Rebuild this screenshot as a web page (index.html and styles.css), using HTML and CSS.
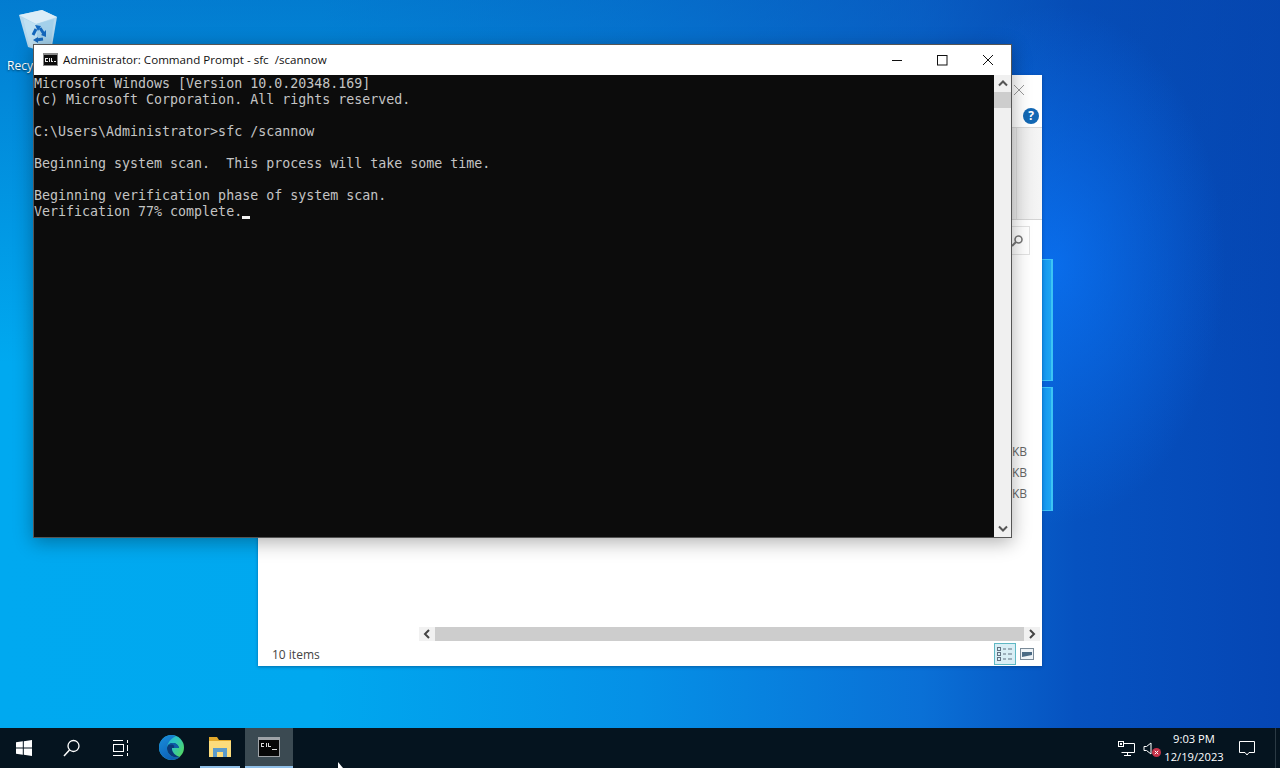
FILE: index.html
```html
<!DOCTYPE html>
<html lang="en">
<head>
<meta charset="utf-8">
<title>Administrator: Command Prompt - sfc /scannow</title>
<link rel="stylesheet" href="styles.css">
</head>
<body>
<main class="desktop">
  <div class="logo-pane logo-top"></div>
  <div class="logo-pane logo-bottom"></div>

  <div class="recycle">
    <svg class="recycle-icon" width="40" height="40" viewBox="0 0 40 40">
      <path d="M1 5 L24 0 L39 7 L34 36 Q22 42 10 37 Z" fill="#b5d8ee"/>
      <path d="M1 5 L24 0 L39 7 L18 14 Z" fill="#dcedf7"/>
      <path d="M5 8 L18 14 L36 9 L33 34 Q22 39 11 35 Z" fill="#a4d0ea"/>
      <path d="M5 8 L18 14 L20 38 Q14 38 11 35 Z" fill="#bfe0f2"/>
      <g fill="none" stroke="#1467bd" stroke-width="3">
        <path d="M15 25 L18 19"/>
        <path d="M22 18 L26 24"/>
        <path d="M25 29 L18 30"/>
      </g>
      <path d="M17 15 L23 16 L20 21 Z M28 20 L28 27 L23 25 Z M20 27 L20 33 L15 30 Z" fill="#1467bd"/>
    </svg>
    <span class="recycle-label">Recy</span>
  </div>

  <section class="explorer">
    <div class="exp-title">
      <svg width="10" height="10" viewBox="0 0 10 10"><path d="M0 0 L10 10 M10 0 L0 10" stroke="#9a9a9a" fill="none"/></svg>
    </div>
    <div class="exp-menu"><span class="help">?</span></div>
    <div class="exp-ribbon"><span class="ribbon-rule"></span></div>
    <div class="exp-address">
      <div class="search-box">
        <svg width="14" height="14" viewBox="0 0 14 14"><circle cx="8.500" cy="5.500" r="3.500" fill="none" stroke="#777" stroke-width="1.600"/><path d="M6 8 L2 12" stroke="#777" stroke-width="2"/></svg>
      </div>
    </div>
    <div class="exp-list">
      <div class="sizes"><span>KB</span><span>KB</span><span>KB</span></div>
    </div>
    <div class="exp-hscroll">
      <span class="arrow-btn"><svg width="8" height="10" viewBox="0 0 8 10"><path d="M6 1 L2 5 L6 9" fill="none" stroke="#444" stroke-width="2"/></svg></span>
      <span class="hthumb"></span>
      <span class="arrow-btn"><svg width="8" height="10" viewBox="0 0 8 10"><path d="M2 1 L6 5 L2 9" fill="none" stroke="#444" stroke-width="2"/></svg></span>
    </div>
    <div class="exp-status">
      <span class="items">10 items</span>
      <span class="view-btn view-on">
        <svg width="18" height="16" viewBox="0 0 18 16"><g fill="none" stroke="#607080"><rect x="1.500" y="1.500" width="3" height="3"/><rect x="1.500" y="6.500" width="3" height="3"/><rect x="1.500" y="11.500" width="3" height="3"/><path d="M7 3h3M12 3h4M7 8h3M12 8h4M7 13h3M12 13h4"/></g></svg>
      </span>
      <span class="view-btn">
        <svg width="14" height="12" viewBox="0 0 14 12"><rect x=".5" y=".5" width="13" height="11" fill="#eef3f7" stroke="#7a8a98"/><path d="M2 9 L2 4 L12 4 L12 7 Z" fill="#4a6a84"/></svg>
      </span>
    </div>
  </section>

  <section class="cmd">
    <header class="cmd-title">
      <svg class="cmd-icon" width="15" height="13" viewBox="0 0 15 13"><rect width="15" height="13" fill="#8a8a8a"/><rect y="2" x="1" width="13" height="10" fill="#0c0c0c"/><path d="M2 5h3v1H2zM2 8h3v1H2zM2 5h1v4H2zM6 5h1v4H6zM8 5h1v3h1v1H8zM11 8h2v1h-2z" fill="#e8e8e8"/></svg>
      <span class="cmd-caption">Administrator: Command Prompt - sfc  /scannow</span>
      <div class="win-btns">
        <span class="win-btn"><svg width="12" height="12" viewBox="0 0 12 12"><path d="M2 6.500h10" stroke="#111" fill="none"/></svg></span>
        <span class="win-btn"><svg width="12" height="12" viewBox="0 0 12 12"><rect x="1.500" y="1.500" width="9.500" height="9.500" stroke="#111" fill="none"/></svg></span>
        <span class="win-btn"><svg width="12" height="12" viewBox="0 0 12 12"><path d="M1 1 L11 11 M11 1 L1 11" stroke="#111" fill="none"/></svg></span>
      </div>
    </header>
    <div class="cmd-body">
      <pre class="console">Microsoft Windows [Version 10.0.20348.169]
(c) Microsoft Corporation. All rights reserved.

C:\Users\Administrator&gt;sfc /scannow

Beginning system scan.  This process will take some time.

Beginning verification phase of system scan.
Verification 77% complete.<span class="caret"></span></pre>
      <div class="vscroll">
        <span class="v-arrow"><svg width="10" height="7" viewBox="0 0 10 7"><path d="M1 5.500 L5 1.500 L9 5.500" fill="none" stroke="#555" stroke-width="2"/></svg></span>
        <span class="vthumb"></span>
        <span class="v-space"></span>
        <span class="v-arrow"><svg width="10" height="7" viewBox="0 0 10 7"><path d="M1 1.500 L5 5.500 L9 1.500" fill="none" stroke="#555" stroke-width="2"/></svg></span>
      </div>
    </div>
  </section>
</main>

<footer class="taskbar">
  <span class="tb-btn tb-start"><svg width="16" height="16" viewBox="0 0 16 16"><path d="M0 2.300 L6.800 1.300 V7.500 H0 Z M7.800 1.200 L16 0 V7.500 H7.800 Z M0 8.500 H6.800 V14.700 L0 13.700 Z M7.800 8.500 H16 V16 L7.800 14.800 Z" fill="#fff"/></svg></span>
  <span class="tb-btn tb-search"><svg width="18" height="18" viewBox="0 0 18 18"><circle cx="10.500" cy="7" r="5.500" fill="none" stroke="#fff" stroke-width="1.300"/><path d="M6.500 11 L1 17" stroke="#fff" stroke-width="1.500" fill="none"/></svg></span>
  <span class="tb-btn tb-task"><svg width="17" height="16" viewBox="0 0 17 16"><g fill="none" stroke="#fff"><path d="M1 .5h10M1 15.500h10"/><rect x="1.500" y="4.500" width="10" height="7"/><path d="M15.500 0v3M15.500 5v6M15.500 13v3"/></g></svg></span>
  <span class="tb-app tb-edge"><svg width="25" height="25" viewBox="0 0 25 25">
    <defs>
      <linearGradient id="edgeA" x1="0" y1="0" x2="1" y2=".6"><stop offset="0" stop-color="#1fa6e6"/><stop offset=".6" stop-color="#2ec5c0"/><stop offset="1" stop-color="#4fd56a"/></linearGradient>
      <linearGradient id="edgeB" x1="0" y1="0" x2=".6" y2="1"><stop offset="0" stop-color="#1a8fdc"/><stop offset="1" stop-color="#0c5fb4"/></linearGradient>
    </defs>
    <circle cx="12.500" cy="12.500" r="12.500" fill="url(#edgeA)"/>
    <path d="M12.500 0 A12.500 12.500 0 0 0 12.500 25 C16 25 19 23.800 21 22 C14 23.500 8 19.500 8 13.500 C8 8.500 11 4 17 1 C15.500 .4 14 0 12.500 0 Z" fill="url(#edgeB)"/>
    <path d="M21 22 C14 23.500 8 19.500 8 13.500 C8 10.500 10 8 13.500 8 C17 8 19.500 10 20 13 H13 C12.500 17 16.500 21 21 22 Z" fill="#0a3a78"/>
    <path d="M20 13 C19.500 10 17 8 13.500 8 C11.500 8 10 9 9.200 10.200 C10.500 9.400 12 9.200 13.500 9.600 C15 10 15.500 11.500 15 13 Z" fill="#0e5da8"/>
  </svg></span>
  <span class="tb-app tb-folder"><svg width="22" height="20" viewBox="0 0 22 20">
    <path d="M0 0 H8 L10 3 H22 V20 H0 Z" fill="#e2a92c"/>
    <path d="M0 4 H22 V20 H0 Z" fill="#fbdc7c"/>
    <path d="M4 20 V11 H18 V20 H14 V15 H8 V20 Z" fill="#5a9bcb"/>
  </svg></span>
  <span class="tb-app tb-cmd"><svg width="22" height="20" viewBox="0 0 22 20">
    <rect width="22" height="20" fill="#a0a4a8"/><rect x="1" y="3" width="20" height="16" fill="#070707"/>
    <path d="M3 6h3v1H3zM3 9h3v1H3zM3 6h1v4H3zM8 6h1v4H8zM10 6h1v3h2v1h-3zM14 12h5v1h-5z" fill="#dcdcdc"/>
  </svg></span>
  <svg class="pointer" width="9" height="6" viewBox="0 0 9 6"><path d="M1 0 V6 H6 Z" fill="#fff"/></svg>
  <div class="tray">
    <svg class="tray-net" width="17" height="15" viewBox="0 0 17 15"><g fill="none" stroke="#fff"><path d="M3.500 2.500H16.500V11.500H3.500"/><path d="M9.500 11.500V14M6 14.500H13"/></g><rect x=".5" y=".5" width="5" height="5" fill="#06141e" stroke="#fff"/><rect x="2" y="2" width="2" height="2" fill="#fff"/></svg>
    <span class="tray-vol">
      <svg width="11" height="13" viewBox="0 0 11 13"><path d="M1 4.500H3.500L8 1V12L3.500 8.500H1Z" fill="none" stroke="#fff"/></svg>
      <svg class="vol-x" width="9" height="9" viewBox="0 0 9 9"><circle cx="4.500" cy="4.500" r="4.500" fill="#c8324a"/><path d="M2.800 2.800L6.200 6.200M6.200 2.800L2.800 6.200" stroke="#fff"/></svg>
    </span>
    <div class="clock"><span>9:03 PM</span><span>12/19/2023</span></div>
    <span class="notify"><svg width="16" height="15" viewBox="0 0 16 15"><path d="M.5.500H15.500V11.500H10L8 14L6 11.500H.5Z" fill="none" stroke="#fff"/></svg></span>
    <span class="show-desktop"></span>
  </div>
</footer>
</body>
</html>
```
FILE: styles.css
```css
* { box-sizing: border-box; }
html, body { margin: 0; height: 100%; overflow: hidden; }
body {
  display: flex;
  flex-direction: column;
  width: 1280px;
  height: 768px;
  font-family: "Open Sans", "Noto Sans", sans-serif;
}
.desktop {
  position: relative;
  flex: 1;
  background:
    radial-gradient(ellipse 170px 260px at 1055px 265px, rgba(10,115,245,.8), rgba(10,115,245,0) 100%),
    linear-gradient(180deg, rgba(6,70,170,.45) 0, rgba(6,70,170,0) 50%),
    linear-gradient(90deg, #00a9f0 0, #00a8ef 25%, #0590e6 50%, #0a70d6 72%, #0652c0 84%, #0546b4 100%);
  overflow: hidden;
}
.logo-pane {
  position: absolute;
  left: 1040px;
  width: 13px;
  background: linear-gradient(90deg, #0e8cec, #1ea6f2);
  border: 1px solid #3cc4f4;
  border-left: 0;
  border-right-width: 2px;
}
.logo-top { top: 259px; height: 122px; }
.logo-bottom { top: 387px; height: 124px; }

.recycle { position: absolute; left: 7px; top: 10px; display: flex; flex-direction: column; align-items: flex-start; }
.recycle-icon { margin-left: 11px; margin-bottom: 8px; }
.recycle-label { color: #fff; font-size: 12px; line-height: 16px; white-space: nowrap; text-shadow: 0 1px 2px rgba(0,0,0,.6); }

.explorer {
  position: absolute;
  left: 258px;
  top: 75px;
  width: 784px;
  height: 591px;
  background: #fff;
  display: flex;
  flex-direction: column;
  box-shadow: 0 1px 3px rgba(0,40,90,.45);
}
.exp-title { height: 29px; display: flex; justify-content: flex-end; align-items: center; padding-right: 18px; }
.exp-menu { height: 24px; border-bottom: 1px solid #d8d8d8; display: flex; justify-content: flex-end; align-items: center; padding-right: 3px; }
.help { width: 16px; height: 16px; border-radius: 50%; background: #1368b4; color: #fff; font-size: 12px; font-weight: 700; line-height: 16px; text-align: center; }
.exp-ribbon { height: 92px; background: linear-gradient(90deg, #e9e9e9 96%, #f6f6f6 100%); border-bottom: 1px solid #d4d4d4; position: relative; }
.ribbon-rule { position: absolute; right: 25px; top: 0; bottom: 0; width: 1px; background: #dcdcdc; }
.exp-address { height: 39px; padding: 6px 12px 0 0; display: flex; justify-content: flex-end; }
.search-box { width: 60px; height: 29px; border: 1px solid #e2e2e2; display: flex; align-items: center; justify-content: flex-end; padding-right: 5px; }
.exp-list { flex: 1; position: relative; }
.sizes { position: absolute; right: 15px; top: 185px; display: flex; flex-direction: column; gap: 5px; color: #666; font-size: 12px; line-height: 16px; }
.exp-hscroll { height: 14px; margin: 0 2px 0 161px; display: flex; }
.arrow-btn { width: 16px; display: flex; align-items: center; justify-content: center; background: #f1f1f1; }
.hthumb { flex: 1; background: #cdcdcd; }
.exp-status { height: 25px; display: flex; align-items: center; padding: 2px 4px 0 14px; }
.items { flex: 1; color: #444; font-size: 12px; }
.view-btn { width: 22px; height: 22px; display: flex; align-items: center; justify-content: center; margin-top: -2px; }
.view-on { background: #d8eef5; border: 1px solid #5fb8c4; }

.cmd {
  position: absolute;
  left: 33px;
  top: 44px;
  width: 979px;
  height: 494px;
  background: #fff;
  border: 1px solid #555;
  display: flex;
  flex-direction: column;
  box-shadow: 0 4px 18px rgba(0,0,0,.32);
}
.cmd-title { height: 30px; display: flex; align-items: center; padding: 0 0 1px 9px; background: #fff; }
.cmd-icon { flex: none; margin-right: 5px; margin-bottom: 1px; }
.cmd-caption { flex: 1; font-size: 11.6px; color: #111; white-space: pre; }
.win-btns { display: flex; height: 28px; }
.win-btn { width: 46px; display: flex; align-items: center; justify-content: center; }
.cmd-body { flex: 1; display: flex; min-height: 0; }
.console {
  flex: 1;
  margin: 0;
  padding: 1px 0 0 0;
  background: #0c0c0c;
  color: #c4c4c4;
  font-family: "DejaVu Sans Mono", "Liberation Mono", monospace;
  font-size: 13.3px;
  line-height: 16px;
  overflow: hidden;
}
.caret { display: inline-block; width: 8px; height: 3px; background: #f2f2f2; vertical-align: baseline; margin-bottom: -3px; }
.vscroll { width: 17px; background: #f0f0f0; display: flex; flex-direction: column; }
.v-arrow { height: 17px; display: flex; align-items: center; justify-content: center; }
.vthumb { height: 16px; background: #cdcdcd; }
.v-space { flex: 1; }

.taskbar {
  height: 40px;
  background: #05141f;
  display: flex;
  align-items: stretch;
  position: relative;
  color: #fff;
}
.tb-btn { display: flex; align-items: center; justify-content: center; }
.tb-start { width: 48px; }
.tb-search { width: 48px; }
.tb-task { width: 48px; }
.tb-app { display: flex; align-items: center; justify-content: center; width: 48px; border-bottom: 2px solid transparent; }
.tb-edge { margin-left: 3px; }
.tb-folder { width: 40px; margin-left: 5px; border-bottom-color: #8fbfe8; }
.tb-cmd { margin-left: 5px; background: #3b4a52; border-bottom-color: #8fbfe8; }
.pointer { position: absolute; left: 337px; top: 34px; }
.tray { margin-left: auto; display: flex; align-items: center; }
.tray-net { margin-right: 8px; }
.tray-vol { position: relative; width: 18px; height: 16px; display: flex; align-items: center; margin-right: 3px; }
.vol-x { position: absolute; left: 9px; top: 8px; }
.clock { width: 60px; display: flex; flex-direction: column; align-items: center; font-size: 11.2px; line-height: 18px; }
.notify { width: 46px; display: flex; align-items: center; justify-content: center; margin-right: 5px; }
.show-desktop { width: 1px; height: 100%; background: #2b3a44; margin-right: 4px; }
```
